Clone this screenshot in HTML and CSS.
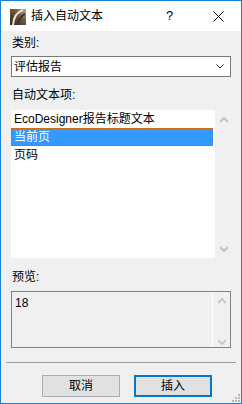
FILE: index.html
```html
<!DOCTYPE html>
<html lang="zh-CN">
<head>
    <meta charset="UTF-8">
    <title>插入自动文本</title>
    <link rel="stylesheet" href="styles.css">
</head>
<body>
    <div class="window">
        <div class="titlebar">
            <svg class="app-icon" width="16" height="16" viewBox="0 0 16 16">
                <defs>
                    <linearGradient id="ig" x1="0" y1="1" x2="1" y2="0">
                        <stop offset="0" stop-color="#2e2618"/>
                        <stop offset="0.6" stop-color="#6b5d45"/>
                        <stop offset="1" stop-color="#b5a98e"/>
                    </linearGradient>
                </defs>
                <rect width="16" height="16" fill="url(#ig)"/>
                <path d="M3 16 Q4 4 13 1" fill="none" stroke="#e9e2d2" stroke-width="2"/>
                <path d="M8 16 Q9 8 15 5" fill="none" stroke="#3a3122" stroke-width="1.5"/>
            </svg>
            <span class="title">插入自动文本</span>
            <span class="help">?</span>
            <svg class="close" width="11" height="11" viewBox="0 0 11 11">
                <path d="M0.5 0.5 L10.5 10.5 M10.5 0.5 L0.5 10.5" stroke="#000" stroke-width="1"/>
            </svg>
        </div>
        <div class="content">
            <div class="label">类别:</div>
            <div class="combo">
                <span>评估报告</span>
                <svg width="8" height="5" viewBox="0 0 8 5">
                    <path d="M0.5 0.5 L4 4 L7.5 0.5" fill="none" stroke="#333" stroke-width="1"/>
                </svg>
            </div>

            <div class="label gap-top">自动文本项:</div>
            <div class="listbox">
                <div class="items">
                    <div class="item">EcoDesigner报告标题文本</div>
                    <div class="item selected">当前页</div>
                    <div class="item">页码</div>
                </div>
                <div class="scroll">
                    <svg class="arrow" width="8" height="6" viewBox="0 0 8 6"><path d="M0 5 L4 1 L8 5" fill="none" stroke="#c2c2c2" stroke-width="2"/></svg>
                    <svg class="arrow" width="8" height="6" viewBox="0 0 8 6"><path d="M0 1 L4 5 L8 1" fill="none" stroke="#c2c2c2" stroke-width="2"/></svg>
                </div>
            </div>

            <div class="label gap-top2">预览:</div>
            <div class="preview">
                <div class="preview-text">18</div>
                <div class="scroll pscroll">
                    <svg class="arrow" width="8" height="6" viewBox="0 0 8 6"><path d="M0 5 L4 1 L8 5" fill="none" stroke="#c8c8c8" stroke-width="2"/></svg>
                    <svg class="arrow" width="8" height="6" viewBox="0 0 8 6"><path d="M0 1 L4 5 L8 1" fill="none" stroke="#c8c8c8" stroke-width="2"/></svg>
                </div>
            </div>

            <div class="separator"></div>

            <div class="buttons">
                <button class="btn">取消</button>
                <button class="btn default">插入</button>
            </div>
        </div>
        <div class="grip">
            <i style="grid-area: 1 / 3"></i>
            <i style="grid-area: 2 / 2"></i><i style="grid-area: 2 / 3"></i>
            <i style="grid-area: 3 / 1"></i><i style="grid-area: 3 / 2"></i><i style="grid-area: 3 / 3"></i>
        </div>
    </div>
</body>
</html>
```

FILE: styles.css
```css
html, body {
    margin: 0;
    padding: 0;
}

body {
    font-family: "Liberation Sans", "Noto Sans CJK SC", sans-serif;
    font-size: 12px;
    color: #000;
    background: #f0f0f0;
}

.window {
    position: relative;
    width: 242px;
    height: 404px;
    box-sizing: border-box;
    border: 1px solid #1883d7;
    background: #f0f0f0;
}

.titlebar {
    height: 30px;
    background: #ffffff;
    display: flex;
    align-items: center;
}

.app-icon {
    margin-left: 9px;
    margin-right: 5px;
    margin-top: 1px;
}

.title {
    flex: 1;
    line-height: 16px;
}

.help {
    width: 12px;
    margin-right: 35px;
    font-size: 13px;
    line-height: 16px;
}

.close {
    margin-right: 17px;
}

.content {
    padding: 4px 10px 0 10px;
}

.label {
    line-height: 16px;
    height: 16px;
    padding-left: 1px;
}

.gap-top {
    margin-top: 10px;
}

.gap-top2 {
    margin-top: 11px;
}

.combo {
    margin-top: 5px;
    height: 21px;
    box-sizing: border-box;
    border: 1px solid #7a7a7a;
    background: #ffffff;
    display: flex;
    align-items: center;
    justify-content: space-between;
    padding: 0 6px 0 2px;
    line-height: 16px;
}

.listbox {
    margin-top: 7px;
    height: 148px;
    display: flex;
}

.items {
    flex: 1;
    background: #ffffff;
}

.item {
    height: 18px;
    line-height: 18px;
    padding-left: 3px;
    box-sizing: border-box;
}

.item.selected {
    background: #3399ff;
    color: #ffffff;
    outline: 1px dotted #cc6600;
    outline-offset: -1px;
    margin-right: 2px;
}

.scroll {
    width: 16px;
    display: flex;
    flex-direction: column;
    justify-content: space-between;
    align-items: center;
    padding: 7px 0 6px;
    box-sizing: border-box;
}

.arrow {
    display: block;
    margin-left: 2px;
}

.preview {
    margin-top: 6px;
    height: 57px;
    box-sizing: border-box;
    border: 1px solid #828282;
    display: flex;
}

.preview-text {
    flex: 1;
    padding: 4px 0 0 3px;
    line-height: 14px;
}

.pscroll {
    width: 18px;
    border-left: 1px solid #ffffff;
    padding: 6px 0 2px;
}

.pscroll .arrow {
    margin-left: 0;
}

.separator {
    margin: 14px -5px 0;
    height: 1px;
    background: #a0a0a0;
}

.buttons {
    margin-top: 12px;
    display: flex;
    justify-content: flex-end;
    gap: 14px;
    padding-right: 19px;
}

.btn {
    width: 78px;
    height: 22px;
    box-sizing: border-box;
    border: 1px solid #adadad;
    background: #e1e1e1;
    font-family: "Liberation Sans", "Noto Sans CJK SC", sans-serif;
    font-size: 12px;
    color: #000;
    padding: 0;
    line-height: 18px;
}

.btn.default {
    border: 2px solid #0078d7;
}

.grip {
    position: absolute;
    right: 1px;
    bottom: 1px;
    display: grid;
    grid-template-columns: repeat(3, 2px);
    grid-template-rows: repeat(3, 2px);
    gap: 1px;
}

.grip i {
    display: block;
    width: 2px;
    height: 2px;
    background: #b8b8b8;
}
```
